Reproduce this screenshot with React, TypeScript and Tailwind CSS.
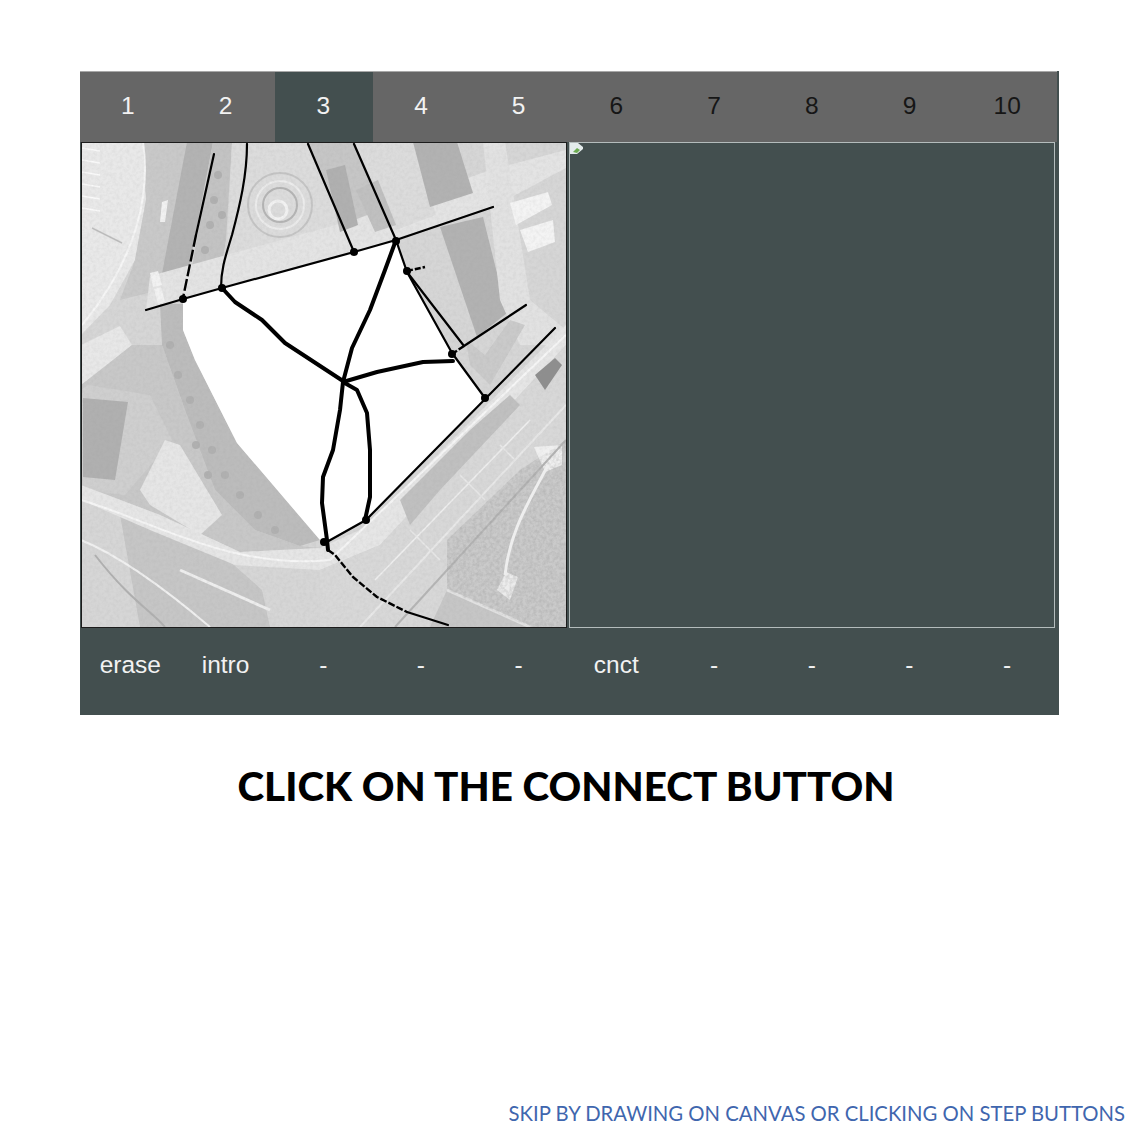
const STEPS = ["1", "2", "3", "4", "5", "6", "7", "8", "9", "10"];
const ACTIONS = ["erase", "intro", "-", "-", "-", "cnct", "-", "-", "-", "-"];

// terrain shapes of the aerial photo, in page coordinates
const AREAS: [string, string][] = [
  ["#e9e9e9", "81,142 143,142 146,200 135,260 110,305 81,335"],
  ["#c9c9c9", "143,142 188,142 160,290 120,300 135,260 146,200"],
  ["#b3b3b3", "187,142 213,142 183,300 157,300"],
  ["#c3c3c3", "213,142 232,142 226,240 222,262 192,268"],
  ["#dcdcdc", "232,142 308,142 350,240 226,270"],
  ["#c6c6c6", "308,142 354,142 396,235 354,245"],
  ["#e4e4e4", "150,276 354,220 490,170 566,150 566,168 493,207 354,252 222,288 146,310"],
  ["#dcdcdc", "354,142 413,142 436,215 396,230"],
  ["#b0b0b0", "326,170 345,165 358,225 340,232"],
  ["#c0c0c0", "356,190 378,180 396,225 375,232"],
  ["#b2b2b2", "413,142 457,142 473,193 430,207"],
  ["#b2b2b2", "440,227 483,217 507,313 477,337"],
  ["#e2e2e2", "483,142 505,142 530,300 566,330 566,345 520,345 500,300"],
  ["#f4f4f4", "510,203 548,192 552,205 516,225"],
  ["#f4f4f4", "520,230 553,220 555,242 528,252"],
  ["#e8e8e8", "81,345 120,326 132,345 100,372 81,385"],
  ["#c8c8c8", "81,385 132,345 162,345 185,410 215,490 255,530 300,546 320,548 240,552 160,515 81,485"],
  ["#bcbcbc", "160,304 183,304 183,330 195,360 237,443 320,540 300,546 255,530 215,490 185,410 162,345"],
  ["#cfcfcf", "88,385 150,395 172,440 125,495 81,490 81,390"],
  ["#b0b0b0", "83,398 128,402 115,480 83,477"],
  ["#e6e6e6", "165,440 180,445 222,515 200,535 150,505 140,490"],
  ["#c6c6c6", "120,515 200,535 262,590 270,627 140,627"],
  ["#e6e6e6", "81,485 160,515 240,552 320,548 366,527 566,325 566,345 380,545 320,570 235,565 150,530 81,500"],
  ["#d8d8d8", "320,570 380,545 566,345 566,440 430,627 320,627"],
  ["#c0c0c0", "400,500 470,430 510,395 520,405 440,490 410,525"],
  ["#cacaca", "447,540 520,470 566,440 566,627 530,627 447,590"],
  ["#c6c6c6", "430,627 447,590 530,627"],
  ["#cacaca", "466,340 485,355 510,320 525,325 490,385 470,365"],
  ["#8e8e8e", "535,375 555,358 562,365 545,390"],
  ["#f2f2f2", "150,273 158,271 162,285 153,287"],
  ["#f2f2f2", "154,289 161,287 165,302 158,304"],
  ["#f2f2f2", "162,202 168,200 165,222 160,222"],
  ["#f0f0f0", "534,447 562,445 562,465 545,472"],
  ["#ececec", "497,590 506,572 518,577 510,600"],
];

const FIELD_TICKS = [148, 160, 172, 184, 196, 208];

const TREES = [
  [218, 175], [214, 200], [210, 225], [222, 215], [205, 250], [170, 345],
  [178, 375], [190, 400], [200, 425], [212, 450], [225, 475], [240, 495],
  [258, 515], [275, 530], [196, 445], [208, 475],
];

const THIN_LINES = [
  "M146 310 L183 299 L222 288 L354 252 L396 240 L493 207",
  "M214 154 L196 235",
  "M247 144 C247 175 240 205 232 235 C226 255 221 268 221 288",
  "M308 144 L354 252",
  "M354 144 L396 240 L407 272 L452 353 L485 398",
  "M407 272 L464 346 L526 305",
  "M555 328 L366 520 L325 543",
  "M407 612 L448 625",
];

const DASHED_LINES = [
  { d: "M196 235 L183 298", dash: "12 3" },
  { d: "M407 271 L425 267", dash: "6 2" },
  { d: "M452 354 L464 346", dash: "6 2" },
  { d: "M328 550 L335 555 L353 577 L377 597 L407 612", dash: "7 2" },
];

const THICK_LINES = [
  "M222 288 L235 302 L262 320 L285 343 L343 381",
  "M396 240 L385 270 L370 310 L352 348 L343 382",
  "M343 382 L377 372 L423 362 L453 361",
  "M343 382 L340 410 L333 450 L323 477 L322 503 L327 540 L328 550",
  "M343 382 L357 390 L367 413 L370 450 L370 497 L365 520",
];

const DOTS = [
  [183, 299], [222, 288], [354, 252], [396, 241], [407, 271],
  [452, 354], [485, 398], [366, 520], [324, 542],
];

function MapDrawing() {
  return (
    <svg viewBox="82 143 484 484" className="block h-[484px] w-[484px]">
      <defs>
        <filter id="grain" x="0" y="0" width="100%" height="100%">
          <feTurbulence type="fractalNoise" baseFrequency="0.3" numOctaves="3" seed="4" />
          <feColorMatrix values="0 0 0 0 0.3  0 0 0 0 0.3  0 0 0 0 0.3  1.6 0 0 0 -0.55" />
        </filter>
        <filter id="soft">
          <feGaussianBlur stdDeviation="0.7" />
        </filter>
        <clipPath id="plots">
          <polygon points="447,540 520,470 566,440 566,627 530,627 447,590" />
        </clipPath>
      </defs>
      <rect x="82" y="143" width="484" height="484" fill="#d6d6d6" />
      <g filter="url(#soft)">
        {AREAS.map(([fill, points], i) => (
          <polygon key={i} points={points} fill={fill} />
        ))}
        {FIELD_TICKS.map((y) => (
          <path key={y} d={`M82 ${y} L100 ${y + 3}`} stroke="#fafafa" strokeWidth="1.5" />
        ))}
        {TREES.map(([cx, cy]) => (
          <circle key={`${cx}-${cy}`} cx={cx} cy={cy} r="4" fill="#b0b0b0" />
        ))}

        {/* amphitheatre rings, stadium curves, roads and rails */}
        <g fill="none" stroke="#b4b4b4" strokeWidth="2">
          <circle cx="278" cy="210" r="9" stroke="#f2f2f2" strokeWidth="3" />
          <circle cx="280" cy="205" r="17" />
          <circle cx="280" cy="205" r="24" stroke="#ececec" />
          <circle cx="280" cy="205" r="32" stroke="#c4c4c4" />
          <path d="M143 142 C150 190 140 255 82 325" stroke="#f6f6f6" />
          <path d="M92 228 L122 243" stroke="#bdbdbd" strokeWidth="1.5" />
          <path d="M81 500 C150 520 230 570 330 560 L566 335" stroke="#f6f6f6" />
          <path d="M81 540 C130 560 190 610 210 627" stroke="#f0f0f0" />
          <path d="M95 555 C130 600 150 610 165 627" stroke="#b0b0b0" />
          <path d="M180 570 L270 610" stroke="#eeeeee" strokeWidth="3" />
          <path d="M360 627 L566 405" stroke="#e8e8e8" />
          <path d="M395 627 L566 440" stroke="#b4b4b4" />
          <path d="M375 580 L530 420" stroke="#eeeeee" strokeWidth="1.5" />
          <path d="M410 530 L440 560 M460 475 L485 500 M500 445 L515 460" stroke="#e8e8e8" strokeWidth="1.5" />
          <path d="M447 590 L530 627" stroke="#e2e2e2" strokeWidth="3" />
        </g>
      </g>

      <rect x="82" y="143" width="484" height="484" filter="url(#grain)" opacity="0.14" />
      <g clipPath="url(#plots)">
        <rect x="440" y="435" width="130" height="195" filter="url(#grain)" opacity="0.28" />
      </g>
      <path d="M505 575 C510 530 530 500 548 465" fill="none" stroke="#eeeeee" strokeWidth="3" />

      <polygon
        points="183,300 222,288 354,252 396,240 407,272 452,353 485,398 366,520 325,543 320,540 237,443 195,360 183,330"
        fill="#ffffff"
      />

      <g fill="none" stroke="#000000" strokeLinejoin="round" strokeLinecap="round">
        {THIN_LINES.map((d) => (
          <path key={d} d={d} strokeWidth="2.2" />
        ))}
        {DASHED_LINES.map((l) => (
          <path key={l.d} d={l.d} strokeWidth="2.4" strokeDasharray={l.dash} strokeLinecap="butt" />
        ))}
        {THICK_LINES.map((d) => (
          <path key={d} d={d} strokeWidth="4" />
        ))}
      </g>
      {DOTS.map(([cx, cy]) => (
        <circle key={`${cx}-${cy}`} cx={cx} cy={cy} r="4" fill="#000000" />
      ))}
    </svg>
  );
}

function BrokenImageIcon() {
  return (
    <svg viewBox="0 0 13 11" className="block h-[11px] w-[13px]">
      <path d="M0 0 H8 L13 4 V6 L7 11 H0 Z" fill="#e4ecec" />
      <path d="M3 9 L7 5 L10 7 L7 10 Z" fill="#6cab52" />
    </svg>
  );
}

export default function App() {
  return (
    <div className="h-[1134px] w-[1134px] overflow-hidden bg-white pt-[71px] font-['Liberation_Sans',sans-serif]">
      <div className="ml-20 w-[979px] bg-[#434f4f]">
        <div className="mr-[2px] grid h-[71px] grid-cols-10 border-t border-[#a8a8a8] bg-[#666666] text-[24.5px]">
          {STEPS.map((step, i) => (
            <div
              key={step}
              className={`flex items-center justify-center pr-[2px] pb-[2px] ${i === 2 ? "bg-[#434f4f]" : ""} ${i < 5 ? "text-[#f2f2f2]" : "text-[#161616]"}`}
            >
              {step}
            </div>
          ))}
        </div>
        <div className="flex gap-[2px] pl-px">
          <div className="border border-[#1c1c1c]">
            <MapDrawing />
          </div>
          <div className="h-[486px] w-[486px] border border-[#b4bcbc]">
            <BrokenImageIcon />
          </div>
        </div>
        <div className="grid h-[87px] w-[977px] grid-cols-10 text-[24.5px] text-[#f2f2f2]">
          {ACTIONS.map((action, i) => (
            <div
              key={i}
              className={`flex items-center justify-center pb-[13px] ${i === 0 ? "pl-[3px]" : "pr-[2px]"}`}
            >
              {action}
            </div>
          ))}
        </div>
      </div>
      <h1 className="mt-[41px] w-[1132px] text-center font-['Lato',sans-serif] text-[40.4px] leading-[60px] font-black text-black">
        CLICK ON THE CONNECT BUTTON
      </h1>
      <p className="mt-[283px] pr-[9px] text-right font-['Lato',sans-serif] text-[20.3px] leading-[28px] text-[#3f66ae]">
        SKIP BY DRAWING ON CANVAS OR CLICKING ON STEP BUTTONS
      </p>
    </div>
  );
}
